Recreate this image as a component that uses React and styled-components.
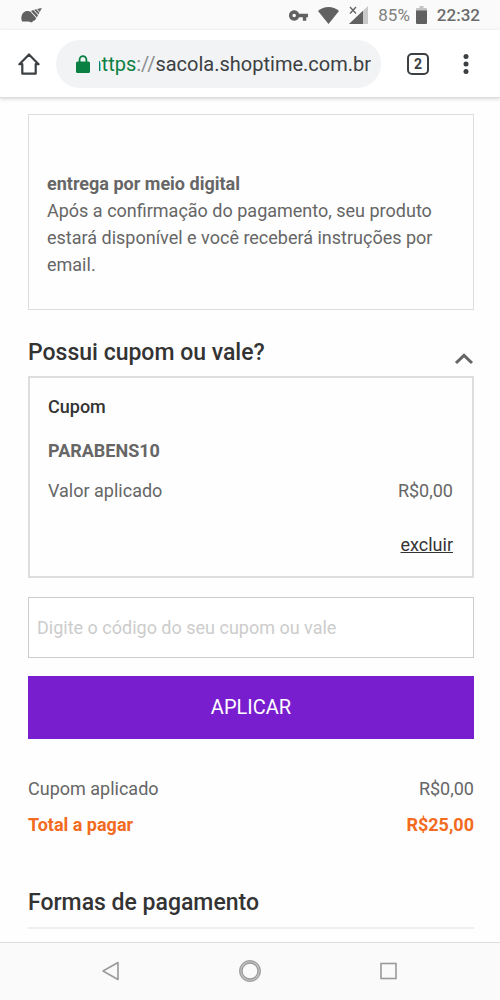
import { useState } from "react"
import styled, { createGlobalStyle } from "styled-components"

export default function App() {
    const [open, setOpen] = useState(true)

    return (
        <>
            <GlobalStyle />
            <StyledScreen>
                <StatusBar />
                <BrowserBar />
                <StyledMain>
                    <StyledDelivery>
                        <strong>entrega por meio digital</strong>
                        <p>Após a confirmação do pagamento, seu produto estará disponível e você receberá instruções por email.</p>
                    </StyledDelivery>

                    <StyledCouponHeader>
                        <h2>Possui cupom ou vale?</h2>
                        <StyledToggle type="button" aria-label="Cupom ou vale" aria-expanded={open} $open={open} onClick={() => setOpen(!open)}>
                            <svg width="20" height="16" viewBox="0 0 20 16">
                                <path d="M2 12L10 4.400L18 12" fill="none" stroke="#666666" strokeWidth="3" />
                            </svg>
                        </StyledToggle>
                    </StyledCouponHeader>
                    {open && <Coupon />}

                    <StyledForm onSubmit={(e) => e.preventDefault()}>
                        <input type="text" aria-label="Código do cupom ou vale" placeholder="Digite o código do seu cupom ou vale" />
                        <button type="submit">APLICAR</button>
                    </StyledForm>

                    <StyledTotals>
                        <StyledRow>
                            <span>Cupom aplicado</span>
                            <span>R$0,00</span>
                        </StyledRow>
                        <StyledRow $total>
                            <span>Total a pagar</span>
                            <span>R$25,00</span>
                        </StyledRow>
                    </StyledTotals>

                    <StyledPaymentTitle>Formas de pagamento</StyledPaymentTitle>
                </StyledMain>
                <NavigationBar />
            </StyledScreen>
        </>
    )
}

function StatusBar() {
    return (
        <StyledStatusBar>
            <svg width="21" height="15" viewBox="0 0 21 15" fill="#616161">
                <path d="M1 13.5C0 11 0 7.500 1.800 5.200C4 2.800 7 2.600 9.300 3.600L15.300 10.200C14.500 11.800 13.300 12.700 12 13L11 14.600L7.500 13.500Z" />
                <path d="M10 3L12.300 2.100L17 7.200L15.900 9.400Z" />
                <path d="M13.100 1.800L15.300 1.200L18.400 4.700L17.400 6.500Z" />
                <path d="M16.100 1L20.800 0L18.800 4Z" />
            </svg>
            <StyledIndicators>
                <svg width="19" height="11" viewBox="1 6 22 12" fill="#616161">
                    <path d="M12.650 10C11.830 7.670 9.610 6 7 6c-3.310 0-6 2.690-6 6s2.690 6 6 6c2.610 0 4.830-1.670 5.650-4H17v4h4v-4h2v-4H12.650zM7 14c-1.100 0-2-.9-2-2s.9-2 2-2 2 .9 2 2-.9 2-2 2z" />
                </svg>
                <svg width="21" height="17" viewBox="0 0 21 17" fill="#616161">
                    <path d="M0 4C6-1.200 15-1.200 21 4L10.500 17Z" />
                </svg>
                <svg width="19" height="18" viewBox="0 0 19 18">
                    <path d="M19 0V18H0Z" fill="#c9c9c9" />
                    <path d="M14 4.700V18H0Z" fill="#616161" />
                    <path d="M0 0H9V9H0Z" fill="#fafafa" />
                    <path d="M1 1L7 7.500M7 1L1 7.500" stroke="#616161" strokeWidth="1.300" />
                </svg>
                <StyledBattery>
                    <span>85%</span>
                    <svg width="11" height="18" viewBox="0 0 11 18">
                        <path d="M3.500 0H7.500V2H10Q11 2 11 3V5H0V3Q0 2 1 2H3.500Z" fill="#c4c4c4" />
                        <path d="M0 4.500H11V17Q11 18 10 18H1Q0 18 0 17Z" fill="#616161" />
                    </svg>
                </StyledBattery>
                <StyledClock>22:32</StyledClock>
            </StyledIndicators>
        </StyledStatusBar>
    )
}

function BrowserBar() {
    return (
        <StyledBrowserBar>
            <StyledIconButton type="button" aria-label="Página inicial">
                <svg width="22" height="22" viewBox="0 0 22 22">
                    <path d="M11 1.400L1.400 11.200H4.300V20.700H17.700V11.200H20.600Z" fill="none" stroke="#3c4043" strokeWidth="2.200" strokeLinejoin="round" />
                </svg>
            </StyledIconButton>
            <StyledAddress type="button">
                <svg width="14" height="18" viewBox="0 0 14 18">
                    <path d="M3.600 8V4.600A3.400 3.400 0 0 1 10.400 4.600V8" fill="none" stroke="#0b8043" strokeWidth="1.800" />
                    <rect y="6.500" width="14" height="11.500" rx="1.500" fill="#0b8043" />
                </svg>
                <StyledUrl>
                    <span><b>https</b><i>://</i>sacola.shoptime.com.br</span>
                </StyledUrl>
            </StyledAddress>
            <StyledTabs>
                <StyledTabCount type="button" aria-label="Abas">2</StyledTabCount>
                <StyledIconButton type="button" aria-label="Menu">
                    <svg width="6" height="20" viewBox="0 0 6 20" fill="#3c4043">
                        <circle cx="3" cy="2.600" r="2.500" />
                        <circle cx="3" cy="10" r="2.500" />
                        <circle cx="3" cy="17.400" r="2.500" />
                    </svg>
                </StyledIconButton>
            </StyledTabs>
        </StyledBrowserBar>
    )
}

function Coupon() {
    return (
        <StyledCoupon>
            <h3>Cupom</h3>
            <strong>PARABENS10</strong>
            <StyledRow>
                <span>Valor aplicado</span>
                <span>R$0,00</span>
            </StyledRow>
            <a href="#excluir">excluir</a>
        </StyledCoupon>
    )
}

function NavigationBar() {
    return (
        <StyledNavigation>
            <StyledIconButton type="button" aria-label="Voltar">
                <svg width="24" height="24" viewBox="0 0 24 24">
                    <path d="M19 3.500V20.500L4 12Z" fill="none" stroke="#9a9a9a" strokeWidth="1.600" strokeLinejoin="round" />
                </svg>
            </StyledIconButton>
            <StyledIconButton type="button" aria-label="Início">
                <svg width="24" height="24" viewBox="0 0 24 24" fill="none">
                    <circle cx="12" cy="12" r="9.500" stroke="#c4c4c4" strokeWidth="3" />
                    <circle cx="12" cy="12" r="10.300" stroke="#9a9a9a" strokeWidth="1" />
                    <circle cx="12" cy="12" r="8" stroke="#9a9a9a" strokeWidth="1.300" />
                </svg>
            </StyledIconButton>
            <StyledIconButton type="button" aria-label="Recentes">
                <svg width="24" height="24" viewBox="0 0 24 24">
                    <rect x="4" y="4.500" width="15" height="15" fill="none" stroke="#9a9a9a" strokeWidth="1.600" />
                </svg>
            </StyledIconButton>
        </StyledNavigation>
    )
}

const GlobalStyle = createGlobalStyle`
    * {
        box-sizing: border-box;
        margin: 0;
        padding: 0;
    }
    body {
        background-color: #FEFEFE;
        font-family: Roboto, "Liberation Sans", sans-serif;
        font-size: 18px;
        line-height: 27px;
        color: #666666;
    }
    button, input {
        font-family: inherit;
    }
    svg {
        display: block;
        flex-shrink: 0;
    }
    h2 {
        font-size: 23px;
        font-weight: 500;
        line-height: 28px;
        color: #333333;
    }
`

const StyledScreen = styled.div`
    display: flex;
    flex-direction: column;
    min-height: 100vh;
`

const StyledStatusBar = styled.div`
    height: 30px;
    padding: 0 20px 0 21px;
    background-color: #FAFAFA;
    display: flex;
    justify-content: space-between;
    align-items: center;
`

const StyledIndicators = styled.div`
    display: flex;
    align-items: center;
    gap: 10px;
`

const StyledBattery = styled.div`
    display: flex;
    align-items: center;
    gap: 6px;
    font-size: 17px;
    color: #808080;
`

const StyledClock = styled.span`
    font-size: 17px;
    font-weight: 500;
    color: #6B6B6B;
`

const StyledBrowserBar = styled.header`
    height: 68px;
    padding: 0 31px 0 18px;
    background-color: #FFFFFF;
    border-bottom: 1px solid #DDDDDD;
    box-shadow: 0 1px 4px rgba(0, 0, 0, 0.16);
    display: flex;
    align-items: center;
    gap: 16px;
`

const StyledIconButton = styled.button`
    border: none;
    background: none;
    cursor: pointer;
`

const StyledAddress = styled.button`
    flex: 1;
    min-width: 0;
    height: 48px;
    padding: 0 10px 0 20px;
    background-color: #F1F3F4;
    border: none;
    border-radius: 24px;
    display: flex;
    align-items: center;
    gap: 9px;
`

const StyledUrl = styled.span`
    flex: 1;
    min-width: 0;
    overflow: hidden;
    display: flex;
    justify-content: flex-end;
    font-size: 20px;
    line-height: 28px;
    white-space: nowrap;
    color: #3C4043;
    b {
        font-weight: 400;
        color: #0B8043;
    }
    i {
        font-style: normal;
        color: #8A8D90;
    }
`

const StyledTabs = styled.div`
    margin-left: 10px;
    display: flex;
    align-items: center;
    gap: 34px;
`

const StyledTabCount = styled.button`
    width: 22px;
    height: 22px;
    border: 2px solid #3C4043;
    border-radius: 5px;
    background: none;
    font-size: 14px;
    font-weight: 700;
    line-height: 18px;
    color: #3C4043;
`

const StyledMain = styled.main`
    flex: 1;
    padding: 16px 26px 13px 28px;
`

const StyledDelivery = styled.section`
    padding: 55px 18px 31px;
    border: 1px solid #DDDDDD;
`

const StyledCouponHeader = styled.div`
    margin-top: 29px;
    margin-bottom: 9px;
    display: flex;
    justify-content: space-between;
    align-items: flex-end;
`

const StyledToggle = styled(StyledIconButton)`
    svg {
        transform: ${({ $open }) => ($open ? "none" : "rotate(180deg)")};
    }
`

const StyledCoupon = styled.section`
    padding: 15px 19px 18px 18px;
    border: 2px solid #DDDDDD;
    display: flex;
    flex-direction: column;
    h3 {
        margin-bottom: 17px;
        font-size: 18px;
        font-weight: 500;
        color: #333333;
    }
    strong {
        margin-bottom: 13px;
    }
    a {
        align-self: flex-end;
        margin-top: 27px;
        color: #333333;
    }
`

const StyledRow = styled.div`
    display: flex;
    justify-content: space-between;
    font-weight: ${({ $total }) => ($total ? 700 : 400)};
    color: ${({ $total }) => ($total ? "#F26B21" : "inherit")};
`

const StyledForm = styled.form`
    margin-top: 19px;
    display: flex;
    flex-direction: column;
    gap: 18px;
    input {
        height: 61px;
        padding: 0 8px;
        background-color: #FFFFFF;
        border: 1px solid #CCCCCC;
        border-radius: 0;
        font-size: 18px;
        color: #333333;
    }
    input::placeholder {
        color: #CCCCCC;
    }
    button {
        height: 63px;
        padding-bottom: 2px;
        background-color: #781ECF;
        border: none;
        font-size: 20px;
        color: #FFFFFF;
    }
`

const StyledTotals = styled.section`
    margin-top: 36px;
    display: flex;
    flex-direction: column;
    gap: 9px;
`

const StyledPaymentTitle = styled.h2`
    margin-top: 51px;
    padding-bottom: 10px;
    border-bottom: 2px solid #EEEEEE;
`

const StyledNavigation = styled.nav`
    height: 59px;
    padding: 0 42px 2px;
    background-color: #FAFAFA;
    border-top: 1px solid #DDDDDD;
    display: flex;
    justify-content: space-around;
    align-items: center;
`
